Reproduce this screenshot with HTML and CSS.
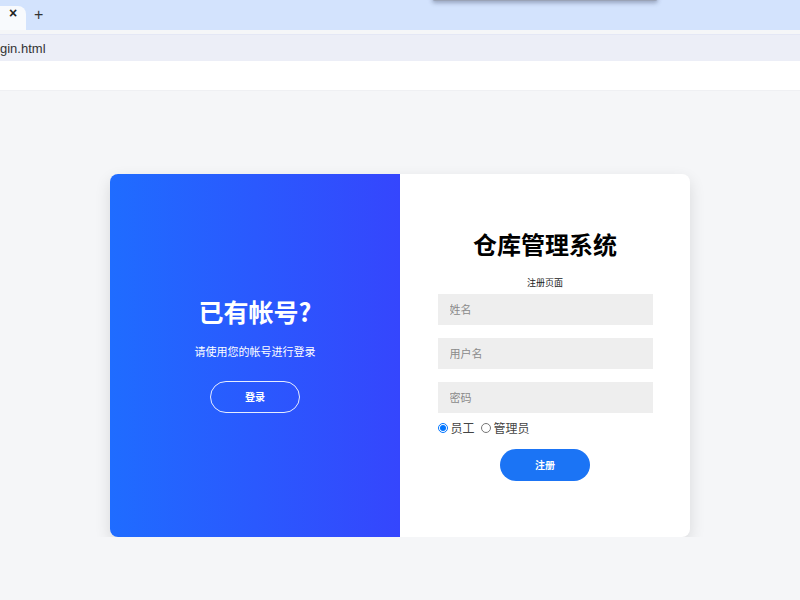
FILE: index.html
```html
<!DOCTYPE html>
<html lang="zh-CN">
<head>
    <meta charset="UTF-8">
    <meta name="viewport" content="width=device-width, initial-scale=1.0">
    <title>仓库管理系统 - 注册</title>
    <link rel="stylesheet" href="styles.css">
</head>
<body>

    <!-- Browser bar -->
    <div class="tabbar">
        <div class="tab"><span class="tab-close">&times;</span></div>
        <span class="tab-new">+</span>
        <div class="tooltip"></div>
    </div>
    <div class="addressbar">
        <span class="url">gin.html</span>
    </div>
    <div class="topstrip"></div>

    <!-- Main Content -->
    <div class="page">
        <div class="card">
            <div class="panel-left">
                <h1>已有帐号?</h1>
                <p>请使用您的帐号进行登录</p>
                <button class="btn-ghost" type="button">登录</button>
            </div>
            <div class="panel-right">
                <h2>仓库管理系统</h2>
                <p class="sub">注册页面</p>
                <form id="registerForm">
                    <input type="text" placeholder="姓名">
                    <input type="text" placeholder="用户名">
                    <input type="password" placeholder="密码">
                    <div class="roles">
                        <label><input type="radio" name="role" value="staff" checked>员工</label>
                        <label><input type="radio" name="role" value="admin">管理员</label>
                    </div>
                    <button class="btn-primary" type="submit">注册</button>
                </form>
            </div>
        </div>
    </div>

</body>
</html>
```

FILE: styles.css
```css
body {
    margin: 0;
    padding: 0;
    font-family: 'Noto Sans CJK SC', 'Noto Sans', sans-serif;
    background-color: #f5f6f8;
    color: #333;
}

/* Browser bar */
.tabbar {
    height: 30px;
    background: #d3e3fd;
    position: relative;
    display: flex;
    align-items: flex-end;
}

.tab {
    width: 26px;
    height: 24px;
    background: #f8fafd;
    border-top-right-radius: 8px;
    display: flex;
    align-items: center;
    justify-content: center;
}

.tab-close {
    font-family: 'Liberation Sans', sans-serif;
    font-size: 14px;
    font-weight: bold;
    color: #222;
    margin-top: -10px;
}

.tab-new {
    font-family: 'Liberation Sans', sans-serif;
    font-size: 16px;
    color: #333;
    margin-left: 8px;
    align-self: center;
}

.tooltip {
    position: absolute;
    left: 432px;
    top: -6px;
    width: 226px;
    height: 7px;
    background: #9aa3b6;
    border-radius: 4px;
    box-shadow: 0 2px 4px rgba(60, 70, 100, 0.4);
}

.addressbar {
    height: 26px;
    margin-top: 4px;
    background: #eceef7;
    border-top: 1px solid #e4e7f5;
    display: flex;
    align-items: center;
}

.url {
    font-family: 'Liberation Sans', sans-serif;
    font-size: 13px;
    color: #333;
}

.topstrip {
    height: 29px;
    background: #fff;
    border-bottom: 1px solid #eff0f3;
}

/* Card */
.page {
    padding-top: 83px;
}

.card {
    width: 580px;
    height: 363px;
    margin: 0 auto;
    display: flex;
    border-radius: 8px;
    overflow: hidden;
    background: #fff;
    box-shadow: 0 6px 16px rgba(0, 0, 0, 0.12);
}

.panel-left {
    width: 290px;
    background: linear-gradient(to right, #1f6cff, #3546fd);
    color: #fff;
    display: flex;
    flex-direction: column;
    align-items: center;
    justify-content: center;
    padding-bottom: 6px;
    box-sizing: border-box;
}

.panel-left h1 {
    margin: 0;
    font-size: 25px;
    line-height: 36px;
    font-weight: bold;
}

.panel-left p {
    margin: 13px 0 0;
    font-size: 11px;
    line-height: 18px;
}

.btn-ghost {
    margin-top: 21px;
    width: 90px;
    height: 32px;
    border: 1px solid #e6ecff;
    border-radius: 16px;
    background: transparent;
    color: #fff;
    font-family: inherit;
    font-size: 10px;
    font-weight: bold;
    cursor: pointer;
}

.panel-right {
    flex: 1;
    display: flex;
    flex-direction: column;
    align-items: center;
    justify-content: center;
    padding-bottom: 5px;
}

.panel-right h2 {
    margin: 0;
    font-size: 24px;
    line-height: 36px;
    font-weight: bold;
    color: #000;
}

.sub {
    margin: 14px 0 4px;
    font-size: 9px;
    line-height: 14px;
    color: #222;
}

form {
    width: 215px;
    display: flex;
    flex-direction: column;
    align-items: center;
}

form input[type="text"], form input[type="password"] {
    box-sizing: border-box;
    width: 100%;
    height: 31px;
    margin-bottom: 13px;
    padding: 0 12px;
    border: none;
    background: #eeeeee;
    font-family: inherit;
    font-size: 11px;
    outline: none;
}

form input[type="password"] {
    margin-bottom: 6px;
}

form input::placeholder {
    color: #8a8a8a;
}

.roles {
    align-self: flex-start;
    display: flex;
    font-size: 12px;
    color: #444;
    line-height: 18px;
}

.roles label {
    display: flex;
    align-items: center;
    margin-right: 6px;
}

.roles input {
    margin: 0 3px 0 0;
    width: 10px;
    height: 10px;
}

.btn-primary {
    margin-top: 12px;
    width: 90px;
    height: 32px;
    border: none;
    border-radius: 16px;
    background: #1b74f5;
    color: #fff;
    font-family: inherit;
    font-size: 10px;
    font-weight: bold;
    cursor: pointer;
}
```
